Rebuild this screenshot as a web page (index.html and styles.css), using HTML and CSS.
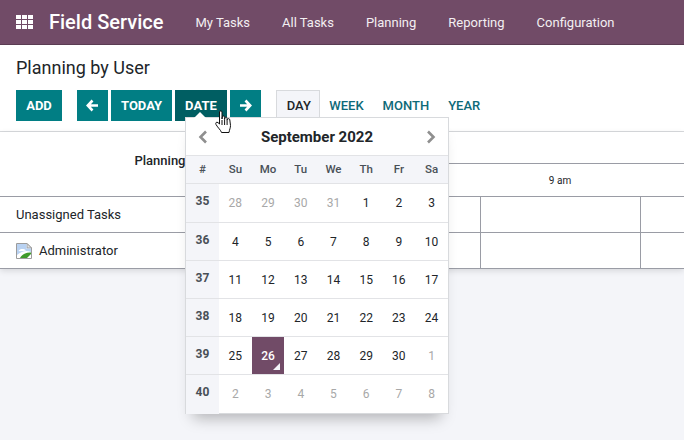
FILE: index.html
```html
<!DOCTYPE html>
<html lang="en">
<head>
    <meta charset="UTF-8">
    <meta name="viewport" content="width=device-width, initial-scale=1.0">
    <title>Planning by User</title>
    <link rel="stylesheet" href="styles.css">
</head>
<body>
    <header class="navbar">
        <svg class="apps-icon" width="17" height="14" viewBox="0 0 17 14" fill="#fff">
            <rect x="0" y="0" width="5" height="4"/><rect x="6" y="0" width="5" height="4"/><rect x="12" y="0" width="5" height="4"/>
            <rect x="0" y="5" width="5" height="4"/><rect x="6" y="5" width="5" height="4"/><rect x="12" y="5" width="5" height="4"/>
            <rect x="0" y="10" width="5" height="4"/><rect x="6" y="10" width="5" height="4"/><rect x="12" y="10" width="5" height="4"/>
        </svg>
        <span class="brand">Field Service</span>
        <nav class="menu">
            <span>My Tasks</span>
            <span>All Tasks</span>
            <span>Planning</span>
            <span>Reporting</span>
            <span>Configuration</span>
        </nav>
    </header>

    <section class="control-panel">
        <h1 class="page-title">Planning by User</h1>
        <div class="toolbar">
            <button class="btn btn-add">ADD</button>
            <div class="btn-group">
                <button class="btn btn-arrow" aria-label="Previous">
                    <svg width="13" height="13" viewBox="0 0 13 13"><path d="M6.5 1.5 L1.8 6.5 L6.5 11.5 M2.2 6.5 H12" fill="none" stroke="#fff" stroke-width="2.6"/></svg>
                </button>
                <button class="btn">TODAY</button>
                <button class="btn btn-active">DATE</button>
                <button class="btn btn-arrow" aria-label="Next">
                    <svg width="13" height="13" viewBox="0 0 13 13"><path d="M6.5 1.5 L11.2 6.5 L6.5 11.5 M10.8 6.5 H1" fill="none" stroke="#fff" stroke-width="2.6"/></svg>
                </button>
            </div>
            <div class="scales">
                <span class="scale scale-active">DAY</span>
                <span class="scale">WEEK</span>
                <span class="scale">MONTH</span>
                <span class="scale">YEAR</span>
            </div>
        </div>
    </section>

    <section class="gantt">
        <div class="gantt-row gantt-head">
            <div class="gantt-title">Planning</div>
            <div class="gantt-timeline">
                <div class="gantt-date"></div>
                <div class="gantt-hours"><span></span><span>9 am</span><span></span></div>
            </div>
        </div>
        <div class="gantt-row">
            <div class="gantt-label">Unassigned Tasks</div>
            <div class="gantt-cells"><span></span><span></span><span></span></div>
        </div>
        <div class="gantt-row">
            <div class="gantt-label">
                <svg class="broken-img" width="16" height="16" viewBox="0 0 16 16">
                    <path d="M0.5 0.5 H11 L15.5 5 V15.5 H0.5 Z" fill="#fff" stroke="#9c9c9c"/>
                    <path d="M11 0.5 V5 H15.5 Z" fill="#e4e4e4" stroke="#9c9c9c"/>
                    <path d="M1 1 H10.5 V5.5 H15 V9 C10 7 6 8 1 12 Z" fill="#b9d2f2"/>
                    <path d="M2.5 8 C4 5.5 8 5.5 10 7.5 C7.5 8 5 8.5 2.5 8 Z" fill="#fff"/>
                    <path d="M4 15 C6 11.5 10 9 15 9.5 V11 L11 15 Z" fill="#3f9a2c"/>
                </svg>
                Administrator
            </div>
            <div class="gantt-cells"><span></span><span></span><span></span></div>
        </div>
    </section>

    <div class="datepicker">
        <div class="datepicker-head">
            <svg width="10" height="14" viewBox="0 0 10 14"><path d="M8 1.5 L2.5 7 L8 12.5" fill="none" stroke="#8f8f8f" stroke-width="2.6"/></svg>
            <span class="datepicker-month">September 2022</span>
            <svg width="10" height="14" viewBox="0 0 10 14"><path d="M2 1.5 L7.5 7 L2 12.5" fill="none" stroke="#8f8f8f" stroke-width="2.6"/></svg>
        </div>
        <table class="calendar">
            <thead>
                <tr><th>#</th><th>Su</th><th>Mo</th><th>Tu</th><th>We</th><th>Th</th><th>Fr</th><th>Sa</th></tr>
            </thead>
            <tbody>
                <tr class="first-week"><th>35</th><td class="off">28</td><td class="off">29</td><td class="off">30</td><td class="off">31</td><td>1</td><td>2</td><td>3</td></tr>
                <tr><th>36</th><td>4</td><td>5</td><td>6</td><td>7</td><td>8</td><td>9</td><td>10</td></tr>
                <tr><th>37</th><td>11</td><td>12</td><td>13</td><td>14</td><td>15</td><td>16</td><td>17</td></tr>
                <tr><th>38</th><td>18</td><td>19</td><td>20</td><td>21</td><td>22</td><td>23</td><td>24</td></tr>
                <tr><th>39</th><td>25</td><td class="today">26</td><td>27</td><td>28</td><td>29</td><td>30</td><td class="off">1</td></tr>
                <tr><th>40</th><td class="off">2</td><td class="off">3</td><td class="off">4</td><td class="off">5</td><td class="off">6</td><td class="off">7</td><td class="off">8</td></tr>
            </tbody>
        </table>
    </div>

    <svg class="hand-cursor" width="17" height="23" viewBox="0 0 17 23">
        <path d="M4.5 2 C4.5 0.5 7 0.5 7 2 V9 L7.3 7 C7.5 5.6 9.5 5.6 9.6 7.2 V9.6 L9.9 8 C10.2 6.8 12 6.9 12.1 8.4 V10.4 L12.5 9.2 C13 8.2 14.8 8.5 14.8 9.9 L15.5 15.5 C15.5 18 14.5 19.5 14 22.5 H6.5 C5.8 20 3 18 1 14.5 C0.2 13 1.4 11.5 3 12.6 L4.5 14 Z" fill="#fff" stroke="#111" stroke-width="1"/>
        <path d="M7 10 V15 M9.6 10 V15 M12.1 10.5 V15" fill="none" stroke="#111" stroke-width="1"/>
    </svg>
</body>
</html>
```

FILE: styles.css
```css
* {
    box-sizing: border-box;
}

body {
    margin: 0;
    height: 440px;
    overflow: hidden;
    background-color: #f4f5f9;
    font-family: Roboto, "Liberation Sans", sans-serif;
    font-size: 13px;
    color: #212529;
}

.navbar {
    display: flex;
    align-items: center;
    height: 45px;
    padding-left: 16px;
    background-color: #714b67;
    border-bottom: 1px solid #5a3c52;
    color: #fff;
}

.brand {
    margin-left: 16px;
    font-size: 20px;
    font-weight: 500;
}

.menu {
    display: flex;
    margin-left: 16px;
}

.menu span {
    padding: 0 16px;
    font-size: 13px;
    color: #f3eff2;
}

.control-panel {
    height: 87px;
    padding: 12px 16px 0;
    background-color: #fff;
    border-bottom: 1px solid #d8dadd;
}

.page-title {
    margin: 0;
    height: 33px;
    font-size: 18px;
    font-weight: 400;
    line-height: 21px;
}

.toolbar {
    display: flex;
    align-items: flex-start;
}

.btn {
    height: 31px;
    padding: 0 10px;
    background-color: #017e84;
    border: none;
    color: #fff;
    font-family: inherit;
    font-size: 13px;
    font-weight: 700;
}

.btn-add {
    width: 46px;
    padding: 0;
}

.btn-group {
    display: flex;
    gap: 3px;
    margin-left: 15px;
}

.btn-arrow {
    display: flex;
    align-items: center;
    justify-content: center;
    width: 31px;
    padding: 0;
}

.btn-active {
    background-color: #005e62;
}

.scales {
    display: flex;
    margin-left: 15px;
}

.scale {
    height: 31px;
    padding: 0 9.5px;
    font-weight: 500;
    line-height: 31px;
    color: #0e6a78;
}

.scale-active {
    width: 44px;
    padding: 0 0 0 10px;
    background-color: #f4f5f9;
    border: 1px solid #d8dadd;
    line-height: 29px;
    color: #212529;
}

.gantt {
    background-color: #fff;
    box-shadow: 0 2px 6px rgba(0, 0, 0, 0.12);
}

.gantt-row {
    display: flex;
    height: 36px;
    border-bottom: 1px solid #9a9ca5;
}

.gantt-head {
    height: 65px;
}

.gantt-title {
    width: 320px;
    padding-top: 21px;
    font-weight: 500;
    text-align: center;
}

.gantt-timeline {
    flex: 1;
}

.gantt-date {
    height: 32px;
    border-bottom: 1px solid #9a9ca5;
}

.gantt-hours {
    display: grid;
    grid-template-columns: 160px 160px 1fr;
    padding-top: 11px;
    font-size: 10px;
    text-align: center;
}

.gantt-label {
    display: flex;
    align-items: center;
    gap: 7px;
    width: 320px;
    padding-left: 16px;
}

.broken-img {
    margin-top: 1px;
}

.gantt-cells {
    display: grid;
    flex: 1;
    grid-template-columns: 160px 160px 1fr;
}

.gantt-cells span {
    border-left: 1px solid #9a9ca5;
}

.datepicker {
    position: absolute;
    left: 185px;
    top: 117px;
    width: 264px;
    height: 297px;
    background-color: #fff;
    border: 1px solid #d8dadd;
    box-shadow: 0 12px 14px -8px rgba(0, 0, 0, 0.28);
}

.datepicker::before {
    content: "";
    position: absolute;
    left: 8px;
    top: -6px;
    border-left: 6px solid transparent;
    border-right: 6px solid transparent;
    border-bottom: 6px solid #fff;
}

.datepicker-head {
    display: flex;
    align-items: center;
    justify-content: space-between;
    height: 37px;
    padding: 0 12px;
}

.datepicker-month {
    font-size: 15px;
    font-weight: 700;
}

.calendar {
    width: 262px;
    border-collapse: collapse;
    table-layout: fixed;
}

.calendar thead tr {
    height: 28px;
    background-color: #f4f5f9;
}

.calendar tbody tr {
    height: 38px;
}

.calendar tbody .first-week {
    height: 39px;
}

.calendar tr {
    border-top: 1px solid #e2e3e6;
}

.calendar tbody tr:last-child {
    height: 39px;
}

.calendar th {
    padding: 0 0 2px;
    font-size: 11.5px;
    font-weight: 500;
    color: #495057;
}

.calendar th:first-child {
    width: 33px;
}

.calendar tbody th {
    padding-bottom: 4px;
    background-color: #f4f5f9;
    font-size: 12px;
    font-weight: 700;
}

.calendar td {
    padding: 0;
    font-size: 12px;
    text-align: center;
}

.calendar .off {
    color: #a8a8a8;
}

.calendar .today {
    position: relative;
    background-color: #714b67;
    color: #fff;
    font-weight: 500;
}

.calendar .today::after {
    content: "";
    position: absolute;
    right: 4px;
    bottom: 4px;
    border-left: 7px solid transparent;
    border-bottom: 7px solid #f4f5f9;
}

.hand-cursor {
    position: absolute;
    left: 215px;
    top: 110px;
}
```
